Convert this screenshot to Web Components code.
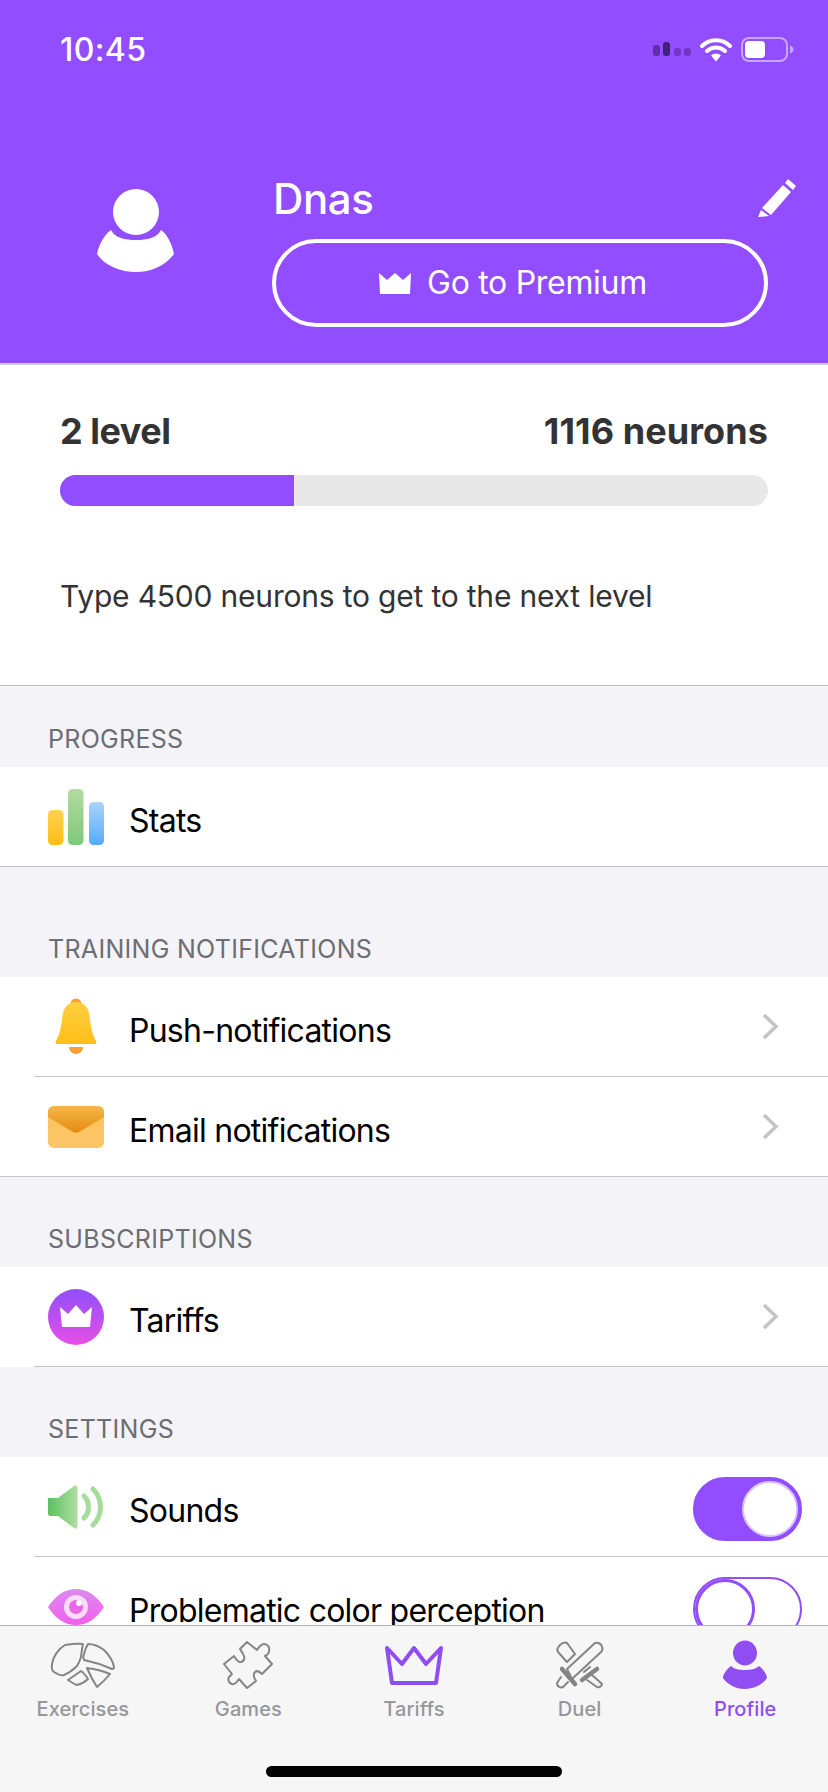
<!DOCTYPE html>
<html>
<head>
<meta charset="utf-8">
<title>Profile</title>
<style>
  html, body { margin: 0; padding: 0; }
  body { font-family: Inter, "Noto Sans", sans-serif; background: #f3f3f8; }
</style>
</head>
<body>
<profile-screen></profile-screen>

<script>
const ICONS = {
  stats: `<svg width="56" height="56" viewBox="0 0 56 56">
    <defs>
      <linearGradient id="a" x1="0" y1="0" x2="0" y2="1"><stop offset="0" stop-color="#fdd34d"/><stop offset="1" stop-color="#ffbd14"/></linearGradient>
      <linearGradient id="b" x1="0" y1="0" x2="0" y2="1"><stop offset="0" stop-color="#b3dba2"/><stop offset="1" stop-color="#7fc878"/></linearGradient>
      <linearGradient id="c" x1="0" y1="0" x2="0" y2="1"><stop offset="0" stop-color="#a9d3fc"/><stop offset="1" stop-color="#55abfd"/></linearGradient>
    </defs>
    <rect x="0" y="21" width="15.500" height="35" rx="4.500" fill="url(#a)"/>
    <rect x="20" y="0" width="15.500" height="56" rx="4.500" fill="url(#b)"/>
    <rect x="41" y="13" width="15" height="43" rx="4.500" fill="url(#c)"/>
  </svg>`,
  bell: `<svg width="56" height="60" viewBox="0 0 56 60">
    <defs><linearGradient id="a" x1="0" y1="0" x2="0" y2="1"><stop offset="0" stop-color="#fdd040"/><stop offset="1" stop-color="#ffbe1a"/></linearGradient></defs>
    <path d="M22.500 7a5.500 5.500 0 0 1 11 0z" fill="#f9a030"/>
    <path d="M21 50h14a7 7 0 0 1-14 0z" fill="#f9a030"/>
    <path d="M28 5c8 0 12.500 5.500 13.500 13 1 10 2 18 6.500 26 .8 1.800.2 3-1.500 3h-37c-1.700 0-2.300-1.200-1.500-3 4.500-8 5.500-16 6.500-26C16 10.500 20 5 28 5z" fill="url(#a)"/>
  </svg>`,
  mail: `<svg width="56" height="42" viewBox="0 0 56 42">
    <defs>
      <linearGradient id="a" x1="0" y1="0" x2="0" y2="1"><stop offset="0" stop-color="#fbc45c"/><stop offset="1" stop-color="#fec568"/></linearGradient>
      <linearGradient id="b" x1="0" y1="0" x2="0" y2="1"><stop offset="0" stop-color="#f5b84a"/><stop offset="1" stop-color="#e58a10"/></linearGradient>
    </defs>
    <rect width="56" height="42" rx="6" fill="url(#a)"/>
    <path d="M0 11V6a6 6 0 0 1 6-6h44a6 6 0 0 1 6 6v5L31 26c-2 1-4 1-6 0z" fill="url(#b)"/>
  </svg>`,
  tariff: `<svg width="56" height="56" viewBox="0 0 56 56">
    <defs><linearGradient id="a" x1="0" y1="0" x2="0" y2="1"><stop offset="0" stop-color="#8f4ffb"/><stop offset="1" stop-color="#e84fe6"/></linearGradient></defs>
    <circle cx="28" cy="28" r="28" fill="url(#a)"/>
    <path d="M12 18l8 7 8-9 8 9 8-7-2 20H14z" fill="#fff"/>
  </svg>`,
  sound: `<svg width="56" height="44" viewBox="0 0 56 44">
    <defs>
      <linearGradient id="a" x1="0" y1="0" x2="1" y2="0"><stop offset="0" stop-color="#5cc060"/><stop offset="1" stop-color="#afdfa2"/></linearGradient>
    </defs>
    <path d="M0 13h10L26 1c1.800-1.200 3.500-.5 3.500 2v38c0 2.500-1.700 3.200-3.500 2L10 31H2c-1 0-2-1-2-2z" fill="url(#a)"/>
    <path d="M36 11c6 6 6 16 0 22" fill="none" stroke="#a4dc98" stroke-width="5" stroke-linecap="round"/>
    <path d="M45 4c10 10 10 26 0 36" fill="none" stroke="#a4dc98" stroke-width="5" stroke-linecap="round"/>
  </svg>`,
  eye: `<svg width="56" height="38" viewBox="0 0 56 38">
    <defs><linearGradient id="a" x1="0" y1="0" x2="0" y2="1"><stop offset="0" stop-color="#dc8af0"/><stop offset="1" stop-color="#f45fec"/></linearGradient></defs>
    <path d="M0 19C8 7 17 1 28 1s20 6 28 18c-8 12-17 18-28 18S8 31 0 19z" fill="url(#a)"/>
    <circle cx="28" cy="19" r="12" fill="#fbdcf9"/>
    <circle cx="28" cy="19" r="7" fill="#ec66e8"/>
    <circle cx="31" cy="15" r="3" fill="#fff"/>
  </svg>`
};

class StatusBar extends HTMLElement {
  connectedCallback() {
    this.attachShadow({ mode: 'open' }).innerHTML = `
      <style>
        :host { display: flex; justify-content: space-between; align-items: center; height: 98px; padding: 0 34px 0 60px; color: #fff; }
        .time { font-size: 32px; font-weight: 500; letter-spacing: 0.4px; }
        .icons { display: flex; align-items: center; gap: 9px; }
        svg { display: block; }
      </style>
      <span class="time">10:45</span>
      <div class="icons">
        <svg width="38" height="14" viewBox="0 0 38 14">
          <rect x="0" y="3" width="7" height="11" rx="3" fill="#5f2ea8"/>
          <rect x="10" y="0" width="7" height="14" rx="3" fill="#43207a"/>
          <rect x="21" y="6" width="7" height="8" rx="3" fill="#7136c4"/>
          <rect x="31" y="6" width="7" height="8" rx="3" fill="#7136c4"/>
        </svg>
        <svg width="32" height="25" viewBox="0 0 32 25">
          <path d="M2 9a20 20 0 0 1 28 0M7 14a13 13 0 0 1 18 0" fill="none" stroke="#fff" stroke-width="4" stroke-linecap="round"/>
          <path d="M11 18.500a7 7 0 0 1 10 0L16 24.500z" fill="#fff"/>
        </svg>
        <svg width="53" height="25" viewBox="0 0 53 25">
          <rect x="1" y="1" width="45" height="23" rx="7" fill="none" stroke="#c7a6ff" stroke-width="2"/>
          <rect x="4" y="4" width="20" height="17" rx="4" fill="#fff"/>
          <path d="M49 8.500c2.500 1 3.500 2.500 3.500 4s-1 3-3.500 4z" fill="#c7a6ff"/>
        </svg>
      </div>`;
  }
}

class ProfileHeader extends HTMLElement {
  connectedCallback() {
    this.attachShadow({ mode: 'open' }).innerHTML = `
      <style>
        :host { display: block; background: #914dff; border-bottom: 2px solid #cfcbe0; color: #fff; height: 363px; }
        .body { display: flex; padding: 74px 32px 0 97px; }
        .avatar { width: 77px; height: 84px; margin: 16px 98px 0 0; flex: none; }
        .info { flex: 1; min-width: 0; }
        .top { display: flex; justify-content: space-between; align-items: flex-start; height: 67px; }
        .name { font-size: 42px; font-weight: 500; line-height: 54px; letter-spacing: -0.4px; margin-left: 1px; }
        .pencil { margin-top: 7px; display: block; }
        .premium { display: flex; align-items: center; justify-content: center; gap: 16px; box-sizing: border-box;
          width: 496px; height: 88px; border: 4px solid #fff; border-radius: 44px; padding-right: 14px; font-size: 32px; letter-spacing: -0.3px; line-height: 1; }
      </style>
      <status-bar></status-bar>
      <div class="body">
        <svg class="avatar" viewBox="0 0 77 84">
          <circle cx="39" cy="24" r="23" fill="#fff"/>
          <path d="M14 42C18 50 28 52 39 52S60 50 64 42C70 46 75 56 77 66 68 78 54 84 39 84S8 78 0 66C2 56 8 46 14 42z" fill="#fff"/>
        </svg>
        <div class="info">
          <div class="top">
            <span class="name">Dnas</span>
            <svg class="pencil" width="38" height="38" viewBox="0 0 38 38">
              <path d="M30 0l8 7-3 4-8-7zM25 6l8 7-20 23-9-7z" fill="#fff"/>
              <path d="M3 31l8 6-11 1z" fill="#fff"/>
            </svg>
          </div>
          <div class="premium">
            <svg width="32" height="21" viewBox="0 0 32 21"><path d="M0 0l8 7 8-7 8 7 8-7-1 21H1z" fill="#fff"/></svg>
            <span>Go to Premium</span>
          </div>
        </div>
      </div>`;
  }
}

class LevelPanel extends HTMLElement {
  connectedCallback() {
    this.attachShadow({ mode: 'open' }).innerHTML = `
      <style>
        :host { display: block; background: #fff; height: 321px; box-sizing: border-box; padding: 44px 60px 0; border-bottom: 1px solid #bdbdc0; color: #333; }
        .top { display: flex; justify-content: space-between; font-size: 36px; font-weight: 700; line-height: 44px; letter-spacing: -0.5px; }
        .num { letter-spacing: 0.08px; }
        .bar { height: 31px; border-radius: 16px; background: #e8e8e8; margin-top: 22px; overflow: hidden; }
        .fill { width: 234px; height: 100%; background: #914dff; }
        .note { font-size: 30px; line-height: 40px; margin-top: 70px; font-weight: 425; letter-spacing: -0.2px; }
      </style>
      <div class="top"><span>2 level</span><span class="num">1116 neurons</span></div>
      <div class="bar"><div class="fill"></div></div>
      <div class="note">Type 4500 neurons to get to the next level</div>`;
  }
}

class SectionHead extends HTMLElement {
  connectedCallback() {
    const h = this.getAttribute('height') || 90;
    this.attachShadow({ mode: 'open' }).innerHTML = `
      <style>
        :host { display: flex; align-items: flex-end; box-sizing: border-box; height: ${h}px; padding: 0 0 13px 48px;
          font-size: 25px; line-height: 30px; color: #6d6d72; background: #f3f3f8; letter-spacing: 0.3px; }
      </style>
      <slot></slot>`;
  }
}

class SettingsRow extends HTMLElement {
  connectedCallback() {
    const icon = this.getAttribute('icon');
    const inset = this.hasAttribute('inset');
    const chevron = this.hasAttribute('chevron');
    const toggle = this.getAttribute('toggle');
    this.attachShadow({ mode: 'open' }).innerHTML = `
      <style>
        :host { display: block; background: #fff; height: 100px; }
        .row { display: flex; align-items: center; height: 99px; padding: 0 26px 0 48px; }
        .icon { width: 56px; display: flex; justify-content: center; flex: none; margin-right: 25px; }
        .label { flex: 1; font-size: 32px; color: #000; letter-spacing: -0.75px; white-space: nowrap; padding-top: 7px; }
        .line { height: 1px; background: #c6c6c8; margin-left: ${inset ? 34 : 0}px; }
        .chev { margin-right: 23px; display: block; }
        toggle-switch { margin-top: 5px; }
      </style>
      <div class="row">
        <div class="icon">${ICONS[icon]}</div>
        <div class="label"><slot></slot></div>
        ${chevron ? `<svg class="chev" width="17" height="27" viewBox="0 0 17 27"><path d="M2 2l12 11.500L2 25" fill="none" stroke="#c4c4c7" stroke-width="3.500"/></svg>` : ''}
        ${toggle ? `<toggle-switch ${toggle === 'on' ? 'on' : ''}></toggle-switch>` : ''}
      </div>
      <div class="line"></div>`;
  }
}

class ToggleSwitch extends HTMLElement {
  connectedCallback() {
    this.attachShadow({ mode: 'open' }).innerHTML = `
      <style>
        :host { display: block; box-sizing: border-box; width: 109px; height: 64px; border-radius: 32px; border: 2px solid #914dff; background: #fff; }
        :host([on]) { background: #914dff; padding: 2px; }
        .knob { box-sizing: border-box; width: 60px; height: 60px; border-radius: 50%; background: #fff; border: 3px solid #914dff; }
        :host([on]) .knob { width: 56px; height: 56px; margin-left: auto; border: 2px solid #d9c4ff; }
      </style>
      <div class="knob"></div>`;
  }
}

class TabItem extends HTMLElement {
  connectedCallback() {
    this.attachShadow({ mode: 'open' }).innerHTML = `
      <style>
        :host { display: flex; flex-direction: column; align-items: center; color: #96969b; }
        :host([active]) { color: #8f4df2; }
        .ic { height: 50px; display: flex; align-items: center; justify-content: center; }
        .txt { font-size: 20px; line-height: 24px; font-weight: 500; margin-top: 7px; letter-spacing: 0.1px; }
      </style>
      <div class="ic"><slot name="icon"></slot></div>
      <div class="txt"><slot></slot></div>`;
  }
}

class TabBar extends HTMLElement {
  connectedCallback() {
    this.attachShadow({ mode: 'open' }).innerHTML = `
      <style>
        :host { display: block; height: 167px; box-sizing: border-box; background: #f6f6f7; border-top: 1px solid #b2b2b2; padding-top: 14px; flex: none; }
        .tabs { display: grid; grid-template-columns: repeat(5, 1fr); }
        .home { width: 296px; height: 11px; border-radius: 6px; background: #000; margin: 45px auto 0; }
        svg { display: block; overflow: visible; }
      </style>
      <div class="tabs">
        <tab-item>
          <svg slot="icon" width="62" height="45" viewBox="0 0 62 45" fill="none" stroke="#858585" stroke-width="2" stroke-linejoin="round">
            <path d="M31 1C25 0 19 1 13 2 6 6 1 14 0 21c-.5 4 0 7 2 8 3 2 7 4 10 3 5-2 9-5 13-9 2-3 3-6 4-9 .5-4 1-9 2-13z"/>
            <path d="M36 1c6 0 12 3 16 6 5 5 9 11 10 17 0 1-1 2-2 2-9-4-18-7-28-9-1-2-1-4 0-6 1-4 2-7 4-10z"/>
            <path d="M16 37l13-9c3 2 5 5 7 8-3 3-7 5-11 6-3-1-6-3-9-5z"/>
            <path d="M35 25c8 1 16 3 23 6-4 5-8 9-13 13-4-6-7-12-10-19z"/>
          </svg>
          Exercises
        </tab-item>
        <tab-item>
          <svg slot="icon" width="48" height="48" viewBox="0 0 48 48" fill="none" stroke="#858585" stroke-width="2" stroke-linejoin="round">
            <path d="M23 1L33 9C35 6 37 3 40 3C44 3 46 7 45 10C45 12 43 14 41 15L48 23L38 33C36 31 33 29 31 31C29 33 30 37 32 40L23 47L15 38C13 41 11 44 8 43C4 42 4 38 5 36C6 35 7 34 8 33L0 23L10 15C12 18 14 22 17 21C21 20 21 16 19 13C18 11 17 9 16 8Z"/>
          </svg>
          Games
        </tab-item>
        <tab-item>
          <svg slot="icon" width="58" height="40" viewBox="0 0 58 40" fill="none" stroke="#8f4df2" stroke-width="4" stroke-linejoin="round">
            <path d="M2 3l15 16L29 3l12 16L56 3l-5 35H7z"/>
          </svg>
          Tariffs
        </tab-item>
        <tab-item>
          <svg slot="icon" width="46" height="46" viewBox="0 0 46 46" fill="none" stroke="#858585" stroke-width="2" stroke-linejoin="round" stroke-linecap="round">
            <path d="M38 1C41 0 45 2 45 5C46 7 45 9 44 10L15 37L10 27Z"/>
            <path d="M4 35L0 41C0 45 4 46 6 45L11 40"/>
            <path d="M1 10C-1 7 1 5 3 3C5 1 8 0 10 1L18 12L10 20Z"/>
            <path d="M27 30L33 25"/>
            <path d="M35 33L45 42C45 44 42 46 40 45L30 38"/>
            <path d="M5 27L18 42M25 38L40 27" stroke-width="4.500"/>
          </svg>
          Duel
        </tab-item>
        <tab-item active>
          <svg slot="icon" width="44" height="48" viewBox="0 0 44 48" fill="#8f4df2">
            <ellipse cx="22" cy="12" rx="12" ry="12.500"/>
            <path d="M8 25c3 3 8 4 14 4s11-1 14-4c4 3 8 8 8 12-4 6-12 11-22 11S4 43 0 37c0-4 4-9 8-12z"/>
          </svg>
          Profile
        </tab-item>
      </div>
      <div class="home"></div>`;
  }
}

class ProfileScreen extends HTMLElement {
  connectedCallback() {
    this.attachShadow({ mode: 'open' }).innerHTML = `
      <style>
        :host { display: flex; flex-direction: column; width: 828px; height: 1792px; overflow: hidden; background: #f3f3f8; }
        .scroll { flex: 1; min-height: 0; overflow: hidden; }
      </style>
      <div class="scroll">
        <profile-header></profile-header>
        <level-panel></level-panel>
        <section-head height="81">PROGRESS</section-head>
        <settings-row icon="stats">Stats</settings-row>
        <section-head height="110">TRAINING NOTIFICATIONS</section-head>
        <settings-row icon="bell" inset chevron>Push-notifications</settings-row>
        <settings-row icon="mail" chevron>Email notifications</settings-row>
        <section-head height="90">SUBSCRIPTIONS</section-head>
        <settings-row icon="tariff" inset chevron>Tariffs</settings-row>
        <section-head height="90">SETTINGS</section-head>
        <settings-row icon="sound" inset toggle="on">Sounds</settings-row>
        <settings-row icon="eye" inset toggle="off">Problematic color perception</settings-row>
      </div>
      <tab-bar></tab-bar>`;
  }
}

customElements.define('status-bar', StatusBar);
customElements.define('profile-header', ProfileHeader);
customElements.define('level-panel', LevelPanel);
customElements.define('section-head', SectionHead);
customElements.define('toggle-switch', ToggleSwitch);
customElements.define('settings-row', SettingsRow);
customElements.define('tab-item', TabItem);
customElements.define('tab-bar', TabBar);
customElements.define('profile-screen', ProfileScreen);
</script>
</body>
</html>
